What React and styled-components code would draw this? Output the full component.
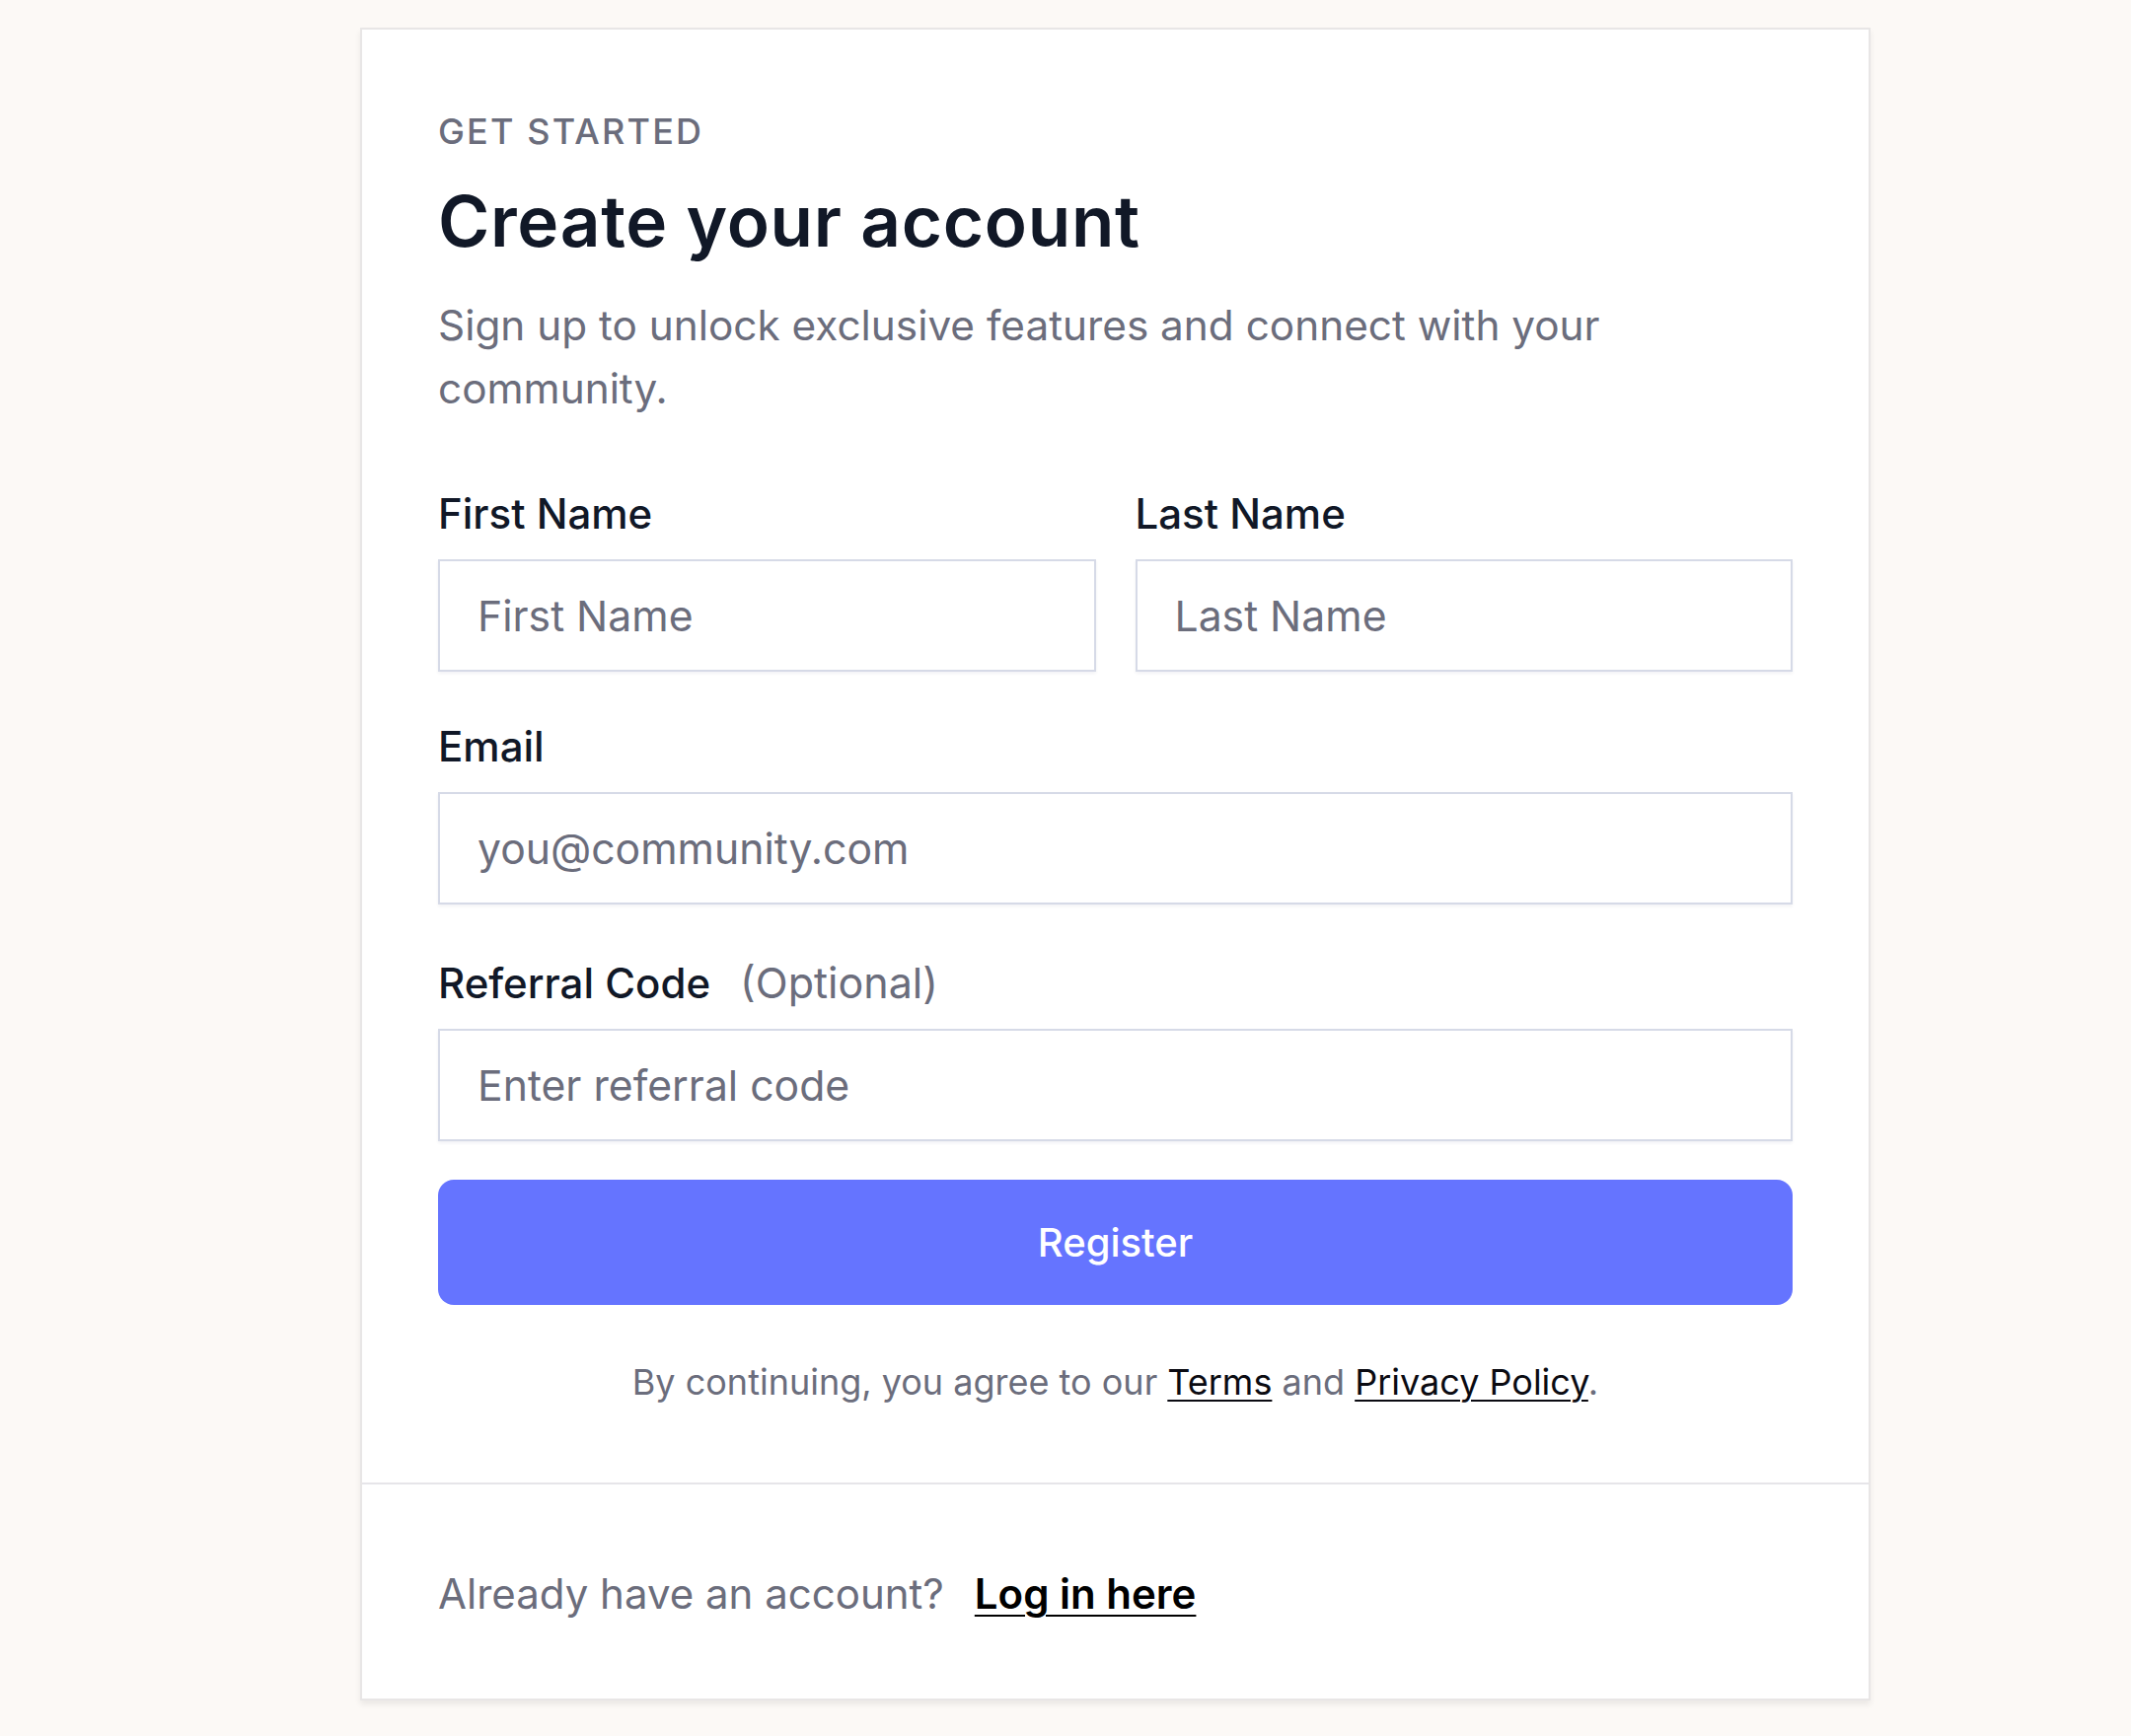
import React from "react";
import styled, { createGlobalStyle } from "styled-components";

const GlobalStyle = createGlobalStyle`
  html, body {
    margin: 0;
    padding: 0;
    background: #fcf9f6;
  }
  * {
    box-sizing: border-box;
  }
  body {
    font-family: Inter, "Noto Sans", sans-serif;
  }
`;

const Page = styled.div`
  min-height: 100vh;
  padding: 28px 0 34px 365px;
`;

const Card = styled.div`
  width: 1531px;
  background: #ffffff;
  border: 2px solid #e8e6e6;
  box-shadow: 0 4px 6px rgba(0, 0, 0, 0.07);
`;

const Body = styled.div`
  padding: 85px 77px 84px;
  display: flex;
  flex-direction: column;
`;

const Eyebrow = styled.div`
  font-size: 36px;
  line-height: 1;
  font-weight: 500;
  letter-spacing: 0.06em;
  color: #6b6d7c;
  text-transform: uppercase;
`;

const Title = styled.h1`
  margin: 38px 0 0;
  font-size: 71px;
  line-height: 1;
  font-weight: 600;
  letter-spacing: 0.7px;
  color: #111827;
`;

const Subtitle = styled.p`
  margin: 38px 0 0;
  font-size: 42.3px;
  line-height: 64px;
  color: #6b6d7c;
  max-width: 1240px;
`;

const NameRow = styled.div`
  margin-top: 74px;
  display: grid;
  grid-template-columns: 1fr 1fr;
  gap: 40px;
`;

const Field = styled.div`
  display: flex;
  flex-direction: column;
  margin-top: ${(p) => p.$top || 0}px;
`;

const Label = styled.label`
  display: flex;
  align-items: baseline;
  gap: 30px;
  font-size: 42px;
  line-height: 1;
  font-weight: 500;
  color: #111827;
  margin-bottom: 25px;
`;

const Optional = styled.span`
  font-weight: 400;
  font-size: 43px;
  color: #6b6d7c;
`;

const Input = styled.input`
  height: 114px;
  width: 100%;
  border: 2px solid #d6dae7;
  border-radius: 0;
  background: #fff;
  box-shadow: 0 2px 3px rgba(30, 40, 80, 0.06);
  padding: 0 38px;
  font-family: Inter, "Noto Sans", sans-serif;
  font-size: 42.7px;
  color: #111827;
  outline: none;

  &::placeholder {
    color: #6b6d7c;
  }
`;

const RegisterButton = styled.button`
  margin-top: 39px;
  height: 127px;
  width: 100%;
  border: none;
  border-radius: 16px;
  background: #6574ff;
  color: #ffffff;
  font-family: Inter, "Noto Sans", sans-serif;
  font-size: 40px;
  font-weight: 500;
  cursor: pointer;
`;

const Legal = styled.p`
  margin: 60px 0 0;
  text-align: center;
  font-size: 36px;
  line-height: 1;
  color: #6b6d7c;
`;

const Link = styled.a`
  color: ${(p) => (p.$strong ? "#000" : "#0b0b12")};
  font-weight: ${(p) => (p.$strong ? 600 : 400)};
  text-decoration: underline;
  text-decoration-thickness: 2px;
  text-underline-offset: ${(p) => (p.$strong ? 6 : 5)}px;
  cursor: pointer;
`;

const Footer = styled.div`
  border-top: 2px solid #e6e5e9;
  padding: 90px 77px 85px;
  display: flex;
  align-items: baseline;
  gap: 31px;
  font-size: 42px;
  line-height: 1;
  color: #6b6d7c;
`;

export default function App() {
  return (
    <>
      <GlobalStyle />
      <Page>
        <Card>
          <Body>
            <Eyebrow>Get started</Eyebrow>
            <Title>Create your account</Title>
            <Subtitle>
              Sign up to unlock exclusive features and connect with your
              community.
            </Subtitle>

            <NameRow>
              <Field>
                <Label>First Name</Label>
                <Input type="text" placeholder="First Name" />
              </Field>
              <Field>
                <Label>Last Name</Label>
                <Input type="text" placeholder="Last Name" />
              </Field>
            </NameRow>

            <Field $top={55}>
              <Label>Email</Label>
              <Input type="email" placeholder="you@community.com" />
            </Field>

            <Field $top={58}>
              <Label>
                Referral Code <Optional>(Optional)</Optional>
              </Label>
              <Input type="text" placeholder="Enter referral code" />
            </Field>

            <RegisterButton type="submit">Register</RegisterButton>

            <Legal>
              By continuing, you agree to our <Link>Terms</Link> and{" "}
              <Link>Privacy Policy</Link>.
            </Legal>
          </Body>
          <Footer>
            <span>Already have an account?</span>
            <Link $strong>Log in here</Link>
          </Footer>
        </Card>
      </Page>
    </>
  );
}
